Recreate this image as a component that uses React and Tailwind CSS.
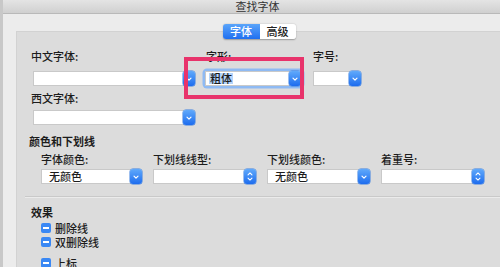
import { useState } from "react";

const FONT = { fontFamily: '"Noto Sans CJK SC", "Noto Sans", sans-serif' };

const Chevron = () => (
  <svg viewBox="0 0 10 10" className="w-[8px] h-[8px]">
    <path d="M2.5 4 L5 6.5 L7.5 4" fill="none" stroke="white" strokeWidth="1.5" strokeLinecap="round" strokeLinejoin="round" />
  </svg>
);

const Stepper = () => (
  <svg viewBox="0 0 10 14" className="w-[8px] h-[11px]">
    <path d="M2.5 5 L5 2.5 L7.5 5" fill="none" stroke="white" strokeWidth="1.4" strokeLinecap="round" strokeLinejoin="round" />
    <path d="M2.5 9 L5 11.5 L7.5 9" fill="none" stroke="white" strokeWidth="1.4" strokeLinecap="round" strokeLinejoin="round" />
  </svg>
);

const Field = ({ value, width, stepper, highlight }) => (
  <div className={`flex h-[15px] ${width}`}>
    <div className="flex-1 bg-white border border-[#c9c9c9] border-r-0 flex items-center pl-[3px] text-[11px] leading-none text-[#1c1c1c] font-medium">
      {value && (
        <span className={highlight ? "bg-[#b4d4fb] px-[1px]" : "pl-[4px]"}>{value}</span>
      )}
    </div>
    <div className="w-[12px] rounded-[3px] bg-gradient-to-b from-[#60a9fb] to-[#1d6cee] flex items-center justify-center shadow-[0_0_0_0.5px_#3a7fe0]">
      {stepper ? <Stepper /> : <Chevron />}
    </div>
  </div>
);

const Label = ({ children, className = "" }) => (
  <div className={`text-[11px] leading-[16px] text-[#1c1c1c] font-medium ${className}`}>{children}</div>
);

const Check = ({ label }) => (
  <div className="flex items-center h-[14px] gap-[4px]">
    <div className="w-[10px] h-[10px] rounded-[2px] bg-[#3a88f4] flex items-center justify-center">
      <div className="w-[6px] h-[1.5px] bg-white" />
    </div>
    <span className="text-[11px] leading-[13px] text-[#1c1c1c] font-medium">{label}</span>
  </div>
);

export default function App() {
  const [tab, setTab] = useState("font");

  return (
    <div className="w-[500px] h-[267px] overflow-hidden bg-[#ececec] border-l-[3px] border-[#c8c8c8] flex flex-col" style={FONT}>
      <div className="h-[14px] shrink-0 bg-gradient-to-b from-[#e4e4e4] to-[#d0d0d0] border-b border-[#b9b9b9] flex items-center justify-center pl-[12px]">
        <span className="text-[11px] leading-[13px] text-[#333]">查找字体</span>
      </div>

      <div className="flex justify-center pl-[15px] mt-[10px] relative z-10">
        <div className="flex h-[15px] rounded-[3px] shadow-[0_0.5px_1.5px_rgba(0,0,0,0.3)] overflow-hidden text-[11px] leading-none font-medium">
          <button
            onClick={() => setTab("font")}
            className={`w-[37px] flex items-center justify-center ${tab === "font" ? "bg-gradient-to-b from-[#5aa4fa] to-[#1f6ff0] text-white" : "bg-white text-[#222]"}`}
          >
            字体
          </button>
          <button
            onClick={() => setTab("adv")}
            className={`w-[36px] flex items-center justify-center ${tab === "adv" ? "bg-gradient-to-b from-[#5aa4fa] to-[#1f6ff0] text-white" : "bg-white text-[#222]"}`}
          >
            高级
          </button>
        </div>
      </div>

      <div className="ml-[13px] mt-[-8px] flex-1 bg-[#dcdcdc] border-l border-t border-[#d2d2d2] pt-[16px] flex flex-col">
        <div className="flex pl-[14px]">
          <div className="w-[164px] flex flex-col">
            <Label>中文字体:</Label>
            <div className="mt-[7px] ml-[2px]"><Field width="w-[162px]" /></div>
            <Label className="mt-[4px]">西文字体:</Label>
            <div className="mt-[4px] ml-[2px]"><Field width="w-[162px]" /></div>
          </div>

          <div className="ml-[10px] w-[97px] flex flex-col relative">
            <Label className="pl-[1px]">字形:</Label>
            <div className="mt-[7px] rounded-[2px] shadow-[0_0_0_2.5px_#8fbaf3]">
              <Field width="w-[96px]" value="粗体" highlight />
            </div>
            <div className="absolute left-[-21px] top-[9px] w-[120px] h-[42px] border-[4px] border-[#e8336b]" />
          </div>

          <div className="ml-[10px] flex flex-col">
            <Label className="pl-[1px]">字号:</Label>
            <div className="mt-[7px] ml-[1px]"><Field width="w-[48px]" /></div>
          </div>
        </div>

        <Label className="mt-[8px] pl-[12px] font-semibold">颜色和下划线</Label>
        <div className="flex pl-[24px] gap-[11px] mt-[2px]">
          <div className="flex flex-col w-[101px]">
            <Label>字体颜色:</Label>
            <div className="mt-[2px]"><Field width="w-[101px]" value="无颜色" /></div>
          </div>
          <div className="flex flex-col w-[103px]">
            <Label>下划线线型:</Label>
            <div className="mt-[2px]"><Field width="w-[103px]" stepper /></div>
          </div>
          <div className="flex flex-col w-[103px]">
            <Label>下划线颜色:</Label>
            <div className="mt-[2px]"><Field width="w-[103px]" value="无颜色" /></div>
          </div>
          <div className="flex flex-col w-[103px]">
            <Label>着重号:</Label>
            <div className="mt-[2px]"><Field width="w-[103px]" stepper /></div>
          </div>
        </div>

        <div className="mt-[12px] ml-[8px] h-[2px] border-t border-[#c9c9c9] border-b border-b-[#ebebeb]" />

        <Label className="mt-[6px] pl-[14px] font-semibold">效果</Label>
        <div className="flex flex-col pl-[24px] mt-[1px]">
          <Check label="删除线" />
          <Check label="双删除线" />
          <div className="mt-[7px]"><Check label="上标" /></div>
        </div>
      </div>
    </div>
  );
}
